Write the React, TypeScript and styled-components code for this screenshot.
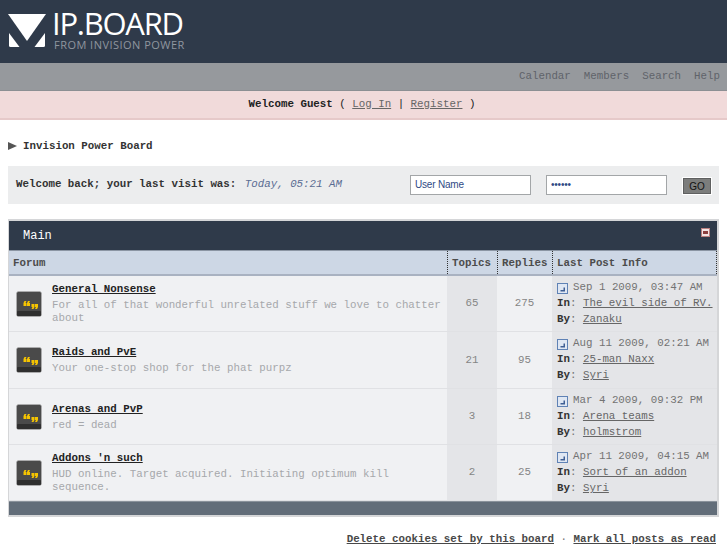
import React from 'react';
import styled, { createGlobalStyle } from 'styled-components';

const GlobalStyle = createGlobalStyle`
  html, body { margin: 0; padding: 0; background: #fff; }
  body { font-family: "Liberation Mono", "Courier New", monospace; font-size: 10.8px; color: #333; }
`;

const Page = styled.div`
  width: 727px;
  height: 545px;
  overflow: hidden;
`;
const Header = styled.div`
  height: 63px;
  background: #2f3a4a;
  display: flex;
  align-items: flex-start;
  padding: 9px 0 0 8px;
  box-sizing: border-box;
  gap: 6px;
`;
const LogoMark = styled.svg`
  width: 38px;
  height: 34px;
  flex: none;
  margin-top: 5px;
`;
const LogoText = styled.div`
  display: flex;
  flex-direction: column;
  font-family: "Open Sans", sans-serif;
`;
const LogoTitle = styled.div`
  color: #fff;
  font-size: 31px;
  line-height: 29px;
  letter-spacing: -1.25px;
`;
const LogoSub = styled.div`
  color: #8f969f;
  font-size: 11px;
  line-height: 12px;
  letter-spacing: 0.47px;
  margin: 1px 0 0 2px;
`;
const NavBar = styled.div`
  height: 28px;
  background: #96999d;
  border-bottom: 1px solid #8c8f93;
  box-sizing: border-box;
  display: flex;
  justify-content: flex-end;
  align-items: center;
  gap: 13px;
  padding: 0 7px 1px 0;
`;
const NavLink = styled.a`
  color: #5f636a;
`;
const WelcomeBar = styled.div`
  height: 29px;
  background: #f1dada;
  border-bottom: 2px solid #e6c9c9;
  box-sizing: border-box;
  display: flex;
  justify-content: center;
  align-items: center;
  white-space: pre;
  padding: 0 3px 2px 0;
  color: #222;
`;
const UserLink = styled.a`
  color: #666;
  text-decoration: underline;
`;
const Crumb = styled.div`
  display: flex;
  align-items: center;
  gap: 6px;
  margin: 19px 0 0 8px;
  height: 14px;
  font-weight: bold;
  color: #333;
`;
const CrumbArrow = styled.span`
  width: 0;
  height: 0;
  border-left: 9px solid #555;
  border-top: 4px solid transparent;
  border-bottom: 4px solid transparent;
`;
const LoginBar = styled.div`
  margin: 13px 8px 0;
  height: 38px;
  background: #ecedee;
  display: flex;
  align-items: center;
  padding: 0 8px;
`;
const LastVisit = styled.div`
  flex: 1;
  font-weight: bold;
  color: #333;
  padding-bottom: 2px;
`;
const VisitDate = styled.em`
  font-weight: normal;
  color: #5a6c92;
  margin-left: 2px;
`;
const LoginField = styled.div`
  width: 121px;
  height: 20px;
  box-sizing: border-box;
  background: #fff;
  border: 1px solid #a3a6a8;
  margin: 0 15px 1px 0;
  padding-left: 4px;
  display: flex;
  align-items: center;
  font-family: "Liberation Sans", Arial, sans-serif;
  font-size: 10px;
  letter-spacing: -0.2px;
  color: #2f4a85;
`;
const GoButton = styled.div`
  width: 28px;
  height: 16px;
  margin: 2px 0 0 1px;
  box-sizing: border-box;
  background: #7c7d7c;
  border: 1px solid #5f6060;
  outline: 1px solid #fff;
  color: #111;
  font-family: "Liberation Sans", Arial, sans-serif;
  font-size: 10px;
  display: flex;
  align-items: center;
  justify-content: center;
`;
const Board = styled.div`
  margin: 15px 8px 0;
  height: 298px;
  box-sizing: border-box;
  border: 2px solid #d5d6d8;
  border-left-width: 1px;
  display: flex;
  flex-direction: column;
  background: #f0f1f3;
`;
const BoardTitle = styled.div`
  height: 29px;
  background: #2f3a4a;
  color: #fff;
  font-size: 12px;
  display: flex;
  align-items: center;
  padding-left: 14px;
  position: relative;
`;
const Collapse = styled.span`
  position: absolute;
  right: 7px;
  top: 7px;
  width: 9px;
  height: 9px;
  box-sizing: border-box;
  background: #f3e4e4;
  border: 1px solid #b97f7f;
  &::after {
    content: '';
    position: absolute;
    left: 1px;
    right: 1px;
    top: 2px;
    height: 3px;
    background: #8c3f3f;
  }
`;
const Columns = 'grid-template-columns: 438px 50px 55px 1fr;';
const HeadRow = styled.div`
  display: grid;
  ${Columns}
  height: 26px;
  background: #cdd7e5;
  border-bottom: 2px solid #a9b2c1;
  border-top: 1px solid #8b95a3;
  box-sizing: border-box;
  color: #4c4c4c;
  font-weight: bold;
`;
const HeadCell = styled.div<{ $dotted?: boolean }>`
  display: flex;
  align-items: center;
  padding-left: 4px;
  border-left: ${p => (p.$dotted ? '1px dotted #333' : 'none')};
  white-space: nowrap;
`;
const LastHeadCell = styled(HeadCell)`
  border-right: 1px dotted #333;
`;
const ForumRow = styled.div<{ $h: number }>`
  display: grid;
  ${Columns}
  height: ${p => p.$h}px;
  box-sizing: border-box;
  border-bottom: 1px solid #e0e1e4;
`;
const ForumCell = styled.div`
  display: flex;
  align-items: center;
  gap: 10px;
  padding: 0 4px 0 7px;
  background: #f0f1f3;
  min-width: 0;
`;
const ForumIcon = styled.svg`
  width: 26px;
  height: 26px;
  flex: none;
`;
const ForumBody = styled.div`
  min-width: 0;
`;
const ForumName = styled.a`
  display: block;
  font-weight: bold;
  color: #222;
  text-decoration: underline;
  line-height: 14px;
`;
const ForumDesc = styled.div`
  color: #a6a8ab;
  line-height: 13px;
  margin-top: 3px;
`;
const CountCell = styled.div<{ $alt?: boolean }>`
  background: ${p => (p.$alt ? '#e4e5e8' : '#f0f1f3')};
  color: #858585;
  display: flex;
  align-items: center;
  justify-content: center;
  padding-bottom: 1px;
`;
const LastCell = styled.div`
  background: #e4e5e8;
  padding: 3px 0 0 5px;
  line-height: 16px;
  white-space: nowrap;
  color: #737373;
`;
const LastDate = styled.div`
  display: flex;
  align-items: center;
  gap: 5px;
`;
const PostIcon = styled.svg`
  width: 11px;
  height: 11px;
  flex: none;
  margin-top: 2px;
`;
const Label = styled.b`
  color: #333;
`;
const LastLink = styled.a`
  color: #666;
  text-decoration: underline;
`;
const BoardFoot = styled.div`
  flex: 1;
  background: #626d79;
  border-top: 1px solid #8a929b;
`;
const Footer = styled.div`
  margin-top: 16px;
  padding-right: 11px;
  display: flex;
  justify-content: flex-end;
  white-space: pre;
  color: #777;
`;
const FootLink = styled.a`
  color: #484848;
  font-weight: bold;
  text-decoration: underline;
`;

function Logo() {
  return (
    <LogoMark viewBox="0 0 38 34">
      <path d="M0 0h38L19 27z" fill="#fff" />
      <path d="M1 19l10.500 14H2.500q-1.500 0-1.500-1.500z" fill="#fff" />
      <path d="M37 19L26.500 33h9q1.500 0 1.500-1.500z" fill="#fff" />
    </LogoMark>
  );
}

function QuoteIcon() {
  return (
    <ForumIcon viewBox="0 0 26 26">
      <rect x="0.5" y="0.5" width="25" height="25" rx="2" fill="#4a4a4a" stroke="#b5b5b5" strokeWidth="0.6" />
      <rect x="1" y="20" width="24" height="5" rx="1" fill="#2f2f2f" />
      <g fill="#f5c400">
        <path d="M8.500 10h2l-1 2h1v3h-3v-3z" />
        <path d="M12 10h2l-1 2h1v3h-3v-3z" />
        <path d="M15.500 13h3v3l-1 2h-2l1-2h-1z" />
        <path d="M19 13h3v3l-1 2h-2l1-2h-1z" />
      </g>
    </ForumIcon>
  );
}

function NewPostIcon() {
  return (
    <PostIcon viewBox="0 0 11 11">
      <rect x="0.5" y="0.5" width="10" height="10" fill="#dfe7f3" stroke="#5f82b5" />
      <path d="M6.500 4.500h1.500v4H3.500V7h3z" fill="#3f5f94" />
    </PostIcon>
  );
}

const forums = [
  { name: 'General Nonsense', desc: 'For all of that wonderful unrelated stuff we love to chatter about', topics: 65, replies: 275, date: 'Sep 1 2009, 03:47 AM', topic: 'The evil side of RV.', by: 'Zanaku', h: 56 },
  { name: 'Raids and PvE', desc: 'Your one-stop shop for the phat purpz', topics: 21, replies: 95, date: 'Aug 11 2009, 02:21 AM', topic: '25-man Naxx', by: 'Syri', h: 57 },
  { name: 'Arenas and PvP', desc: 'red = dead', topics: 3, replies: 18, date: 'Mar 4 2009, 09:32 PM', topic: 'Arena teams', by: 'holmstrom', h: 56 },
  { name: "Addons 'n such", desc: 'HUD online. Target acquired. Initiating optimum kill sequence.', topics: 2, replies: 25, date: 'Apr 11 2009, 04:15 AM', topic: 'Sort of an addon', by: 'Syri', h: 56 },
];

export default function App() {
  return (
    <Page>
      <GlobalStyle />
      <Header>
        <Logo />
        <LogoText>
          <LogoTitle>IP.BOARD</LogoTitle>
          <LogoSub>FROM INVISION POWER</LogoSub>
        </LogoText>
      </Header>
      <NavBar>
        <NavLink>Calendar</NavLink>
        <NavLink>Members</NavLink>
        <NavLink>Search</NavLink>
        <NavLink>Help</NavLink>
      </NavBar>
      <WelcomeBar>
        <b>Welcome Guest</b> ( <UserLink>Log In</UserLink> | <UserLink>Register</UserLink> )
      </WelcomeBar>
      <Crumb>
        <CrumbArrow />
        Invision Power Board
      </Crumb>
      <LoginBar>
        <LastVisit>
          Welcome back; your last visit was: <VisitDate>Today, 05:21 AM</VisitDate>
        </LastVisit>
        <LoginField>User Name</LoginField>
        <LoginField>••••••</LoginField>
        <GoButton>GO</GoButton>
      </LoginBar>
      <Board>
        <BoardTitle>
          Main
          <Collapse />
        </BoardTitle>
        <HeadRow>
          <HeadCell>Forum</HeadCell>
          <HeadCell $dotted>Topics</HeadCell>
          <HeadCell $dotted>Replies</HeadCell>
          <LastHeadCell $dotted>Last Post Info</LastHeadCell>
        </HeadRow>
        {forums.map(f => (
          <ForumRow key={f.name} $h={f.h}>
            <ForumCell>
              <QuoteIcon />
              <ForumBody>
                <ForumName>{f.name}</ForumName>
                <ForumDesc>{f.desc}</ForumDesc>
              </ForumBody>
            </ForumCell>
            <CountCell $alt>{f.topics}</CountCell>
            <CountCell>{f.replies}</CountCell>
            <LastCell>
              <LastDate>
                <NewPostIcon />
                {f.date}
              </LastDate>
              <div>
                <Label>In</Label>: <LastLink>{f.topic}</LastLink>
              </div>
              <div>
                <Label>By</Label>: <LastLink>{f.by}</LastLink>
              </div>
            </LastCell>
          </ForumRow>
        ))}
        <BoardFoot />
      </Board>
      <Footer>
        <FootLink>Delete cookies set by this board</FootLink> · <FootLink>Mark all posts as read</FootLink>
      </Footer>
    </Page>
  );
}
